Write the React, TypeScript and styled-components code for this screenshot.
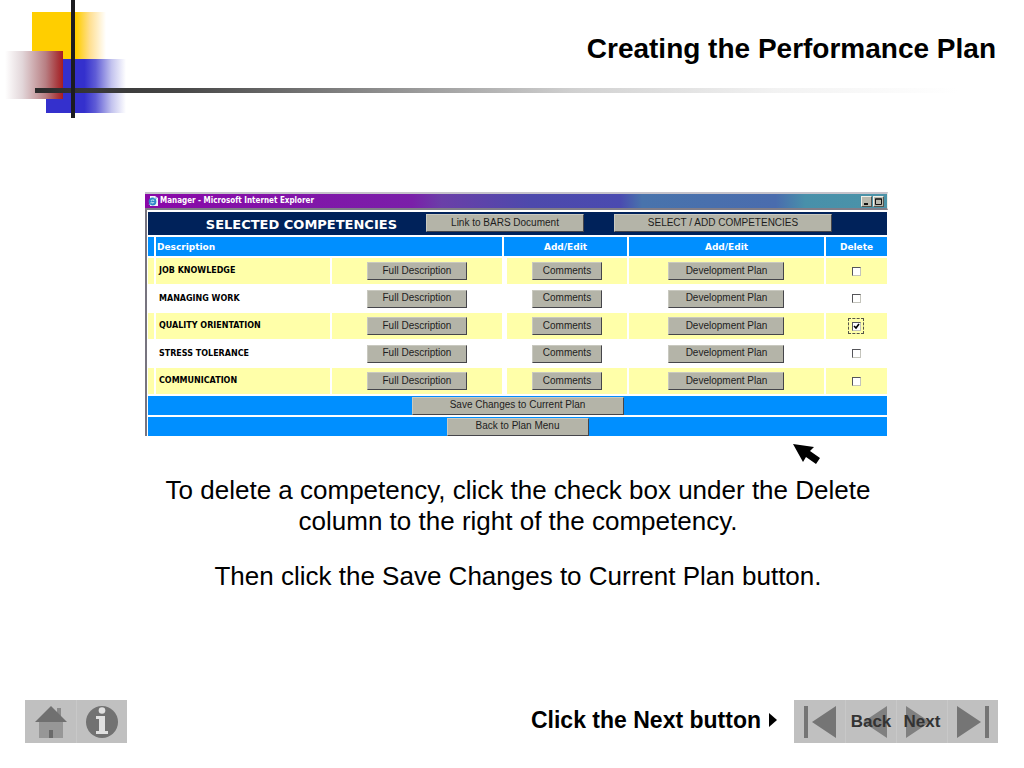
import React from "react";
import styled, { createGlobalStyle, css } from "styled-components";

const sans = `"Liberation Sans", Arial, Helvetica, sans-serif`;
const verdana = `"DejaVu Sans", Verdana, sans-serif`;
const tahoma = `"DejaVu Sans Condensed", "DejaVu Sans", Tahoma, sans-serif`;

const GlobalStyle = createGlobalStyle`
  *, *::before, *::after { box-sizing: border-box; }
  body { margin: 0; background: #fff; color: #000; font-family: ${sans}; }
`;

const Slide = styled.div`
  display: flex;
  flex-direction: column;
  min-height: 100vh;
`;

const Header = styled.header`
  position: relative;
  height: 120px;
  padding: 32px 28px 0 132px;
`;

const Title = styled.h1`
  margin: 0;
  font-size: 28px;
  line-height: 34px;
  font-weight: bold;
  text-align: right;
`;

const Blocks = styled.svg`
  position: absolute;
  left: 0;
  top: 0;
`;

const Rule = styled.div`
  position: absolute;
  left: 35px;
  right: 28px;
  top: 88px;
  height: 5px;
  background: linear-gradient(to right, #2b2b2b 0%, #474747 15%, #8a8a8a 35%, #d0d0d0 56%, #f2f2f2 77%, #fff 96%);
`;

const VerticalBar = styled.div`
  position: absolute;
  left: 71px;
  top: 0;
  width: 4px;
  height: 118px;
  background: #1c1c20;
`;

const Main = styled.main`
  display: flex;
  flex-direction: column;
  align-items: center;
  padding: 72px 16px 0 25px;
`;

const Window = styled.section`
  width: 100%;
  max-width: 743px;
`;

const TitleBar = styled.div`
  display: flex;
  align-items: center;
  gap: 2px;
  height: 18px;
  padding: 0 3px;
  border-top: 2px solid #c6c3cb;
  border-right: 1px solid #f0efe8;
  border-bottom: 2px solid #807d88;
  color: #fff;
  font: bold 8px/14px ${tahoma};
  background: linear-gradient(to right, #8a08a8 0%, #7a1fa9 36%, #6a3fa8 40%, #4d49ac 52%, #4a4ab0 64%, #4873ac 67%, #4a6cae 85%, #4890aa 89%, #4b93a8 100%);
`;

const TitleText = styled.span`
  flex: 1;
`;

const WindowControl = styled.button`
  display: flex;
  width: 11px;
  height: 11px;
  padding: 0;
  border: 1px solid;
  border-color: #f0efe8 #55554f #55554f #f0efe8;
  background: #b9b9ae;
  margin-left: -1px;
`;

const WindowBody = styled.div`
  padding: 2px 0 0 1px;
  border-left: 2px solid #77747f;
`;

const Band = styled.div`
  display: grid;
  grid-template-columns: 278fr 158fr 30fr 218fr 55fr;
  height: 23px;
  margin-right: 1px;
  padding-top: 2px;
  background: #00225a;
`;

const BandTitle = styled.h2`
  margin: 0;
  padding-right: 29px;
  color: #fff;
  font: bold 13px/22px ${verdana};
  text-align: right;
  white-space: nowrap;
`;

const PlanButton = styled.button<{ $width?: string; $column?: number }>`
  width: ${(p) => p.$width ?? "100%"};
  height: 18px;
  padding: 0 0 1px;
  border: 1px solid;
  border-color: #c9c9c0 #45454a #45454a #c9c9c0;
  background: #b4b4a8;
  color: #1d1d1d;
  font: 10px/14px ${sans};
  white-space: nowrap;
  ${(p) =>
    p.$column &&
    css`
      grid-column: ${p.$column};
    `}
`;

const Table = styled.table`
  width: 100%;
  margin-top: 2px;
  table-layout: fixed;
  border-spacing: 0;
`;

const HeadCell = styled.th<{ $left?: boolean; $plain?: boolean }>`
  height: 21px;
  padding: 0 0 0 ${(p) => (p.$left ? 1 : 0)}px;
  border: solid #fff;
  border-width: 0 ${(p) => (p.$plain ? 1 : 2)}px 2px 0;
  background: #008fff;
  color: #fff;
  font: bold 9px/18px ${verdana};
  text-align: ${(p) => (p.$left ? "left" : "center")};
`;

const Row = styled.tr<{ $shaded: boolean }>`
  height: ${(p) => (p.$shaded ? 28 : 27)}px;
  background: ${(p) => (p.$shaded ? "#ffffa9" : "#fff")};
`;

const cell = css`
  padding: 0;
  border: solid #fff;
  border-width: 0 2px 2px 0;
  line-height: 0;
`;

const Cell = styled.td<{ $inset?: boolean }>`
  ${cell}
  border-left-width: ${(p) => (p.$inset ? 3 : 0)}px;
  text-align: center;
  vertical-align: middle;
  &:last-child { border-right-width: 1px; }
`;

const NameCell = styled.th`
  ${cell}
  padding-left: 3px;
  font: bold 8px/12px ${verdana};
  text-align: left;
`;

const ActionCell = styled.td`
  height: 19px;
  padding: 0;
  border-right: 1px solid #fff;
  background: #008fff;
  text-align: center;
  line-height: 0;
  tr:not(:last-child) > & {
    height: 21px;
    border-bottom: 2px solid #fff;
  }
`;

const Check = styled.label`
  display: inline-flex;
  align-items: center;
  justify-content: center;
  width: 16px;
  height: 16px;
  border: 1px dashed transparent;
  &:has(input:checked) { border-color: #55554a; }
`;

const CheckBox = styled.input`
  appearance: none;
  width: 9px;
  height: 9px;
  margin: 0;
  border: 1px solid;
  border-color: #55555a #c4c4bc #c4c4bc #55555a;
  background: #fff;
`;

const Tick = styled.svg`
  position: absolute;
  pointer-events: none;
`;

const Pointer = styled.svg`
  align-self: flex-end;
  margin: 8px 187px 0 0;
`;

const Instruction = styled.p`
  max-width: 720px;
  margin: 0 0 24px;
  font-size: 26px;
  line-height: 31px;
  text-align: center;
`;

const Text = styled.div`
  display: flex;
  flex-direction: column;
  align-items: center;
  padding: 10px 0 0 3px;
`;

const Footer = styled.footer`
  display: flex;
  align-items: center;
  margin-top: auto;
  padding: 0 26px 25px 25px;
`;

const NavGroup = styled.nav`
  display: flex;
`;

const NavButton = styled.button`
  display: grid;
  place-items: center;
  width: 51px;
  height: 43px;
  padding: 0;
  border: 0;
  background: #c0c0c0;
  color: #333;
  font: bold 17px/20px ${sans};
  & + & { border-left: 1px solid #c8c8c8; }
  & > * { grid-area: 1 / 1; }
`;

const Prompt = styled.p`
  display: flex;
  align-items: center;
  gap: 8px;
  margin: 0 17px 4px auto;
  font-size: 23px;
  line-height: 26px;
  font-weight: bold;
`;

const competencies = [
  { name: "JOB KNOWLEDGE", remove: false },
  { name: "MANAGING WORK", remove: false },
  { name: "QUALITY ORIENTATION", remove: true },
  { name: "STRESS TOLERANCE", remove: false },
  { name: "COMMUNICATION", remove: false },
];

const columns = [8, 176, 172, 125, 197, 62];

function Decoration() {
  return (
    <>
      <Blocks width="132" height="120" aria-hidden="true">
        <defs>
          <linearGradient id="gold">
            <stop offset="0.6" stopColor="#ffce00" />
            <stop offset="0.78" stopColor="#ffdf90" />
            <stop offset="1" stopColor="#fff" />
          </linearGradient>
          <linearGradient id="blue">
            <stop offset="0.48" stopColor="#3430cd" />
            <stop offset="0.62" stopColor="#5f5cd6" />
            <stop offset="0.82" stopColor="#c3c3ee" />
            <stop offset="1" stopColor="#fff" />
          </linearGradient>
          <linearGradient id="red">
            <stop offset="0" stopColor="#fff" />
            <stop offset="0.3" stopColor="#e2d6d9" />
            <stop offset="0.7" stopColor="#b87f83" />
            <stop offset="0.9" stopColor="#a93c40" />
            <stop offset="1" stopColor="#a81c22" />
          </linearGradient>
        </defs>
        <rect x="32" y="12" width="74" height="48" fill="url(#gold)" />
        <rect x="46" y="59" width="80" height="54" fill="url(#blue)" />
        <rect x="5" y="51" width="58" height="48" fill="url(#red)" />
      </Blocks>
      <Rule />
      <VerticalBar />
    </>
  );
}

export default function App() {
  return (
    <>
      <GlobalStyle />
      <Slide>
        <Header>
          <Decoration />
          <Title>Creating the Performance Plan</Title>
        </Header>

        <Main>
          <Window>
            <TitleBar>
              <svg width="10" height="12" viewBox="0 0 10 12" aria-hidden="true">
                <path d="M2 1h5l3 2v8H2z" fill="#f4f4f8" />
                <circle cx="4.500" cy="6.500" r="3" fill="#d8ecf8" stroke="#2d86c8" strokeWidth="1.800" />
                <path d="M2 6.500h6" stroke="#2d86c8" strokeWidth="1.500" />
                <path d="M1 10Q6 2 9 3" fill="none" stroke="#6fb4dc" />
              </svg>
              <TitleText>Manager - Microsoft Internet Explorer</TitleText>
              <WindowControl aria-label="Minimize">
                <svg width="9" height="9"><path d="M2 7h4" stroke="#111" strokeWidth="2" /></svg>
              </WindowControl>
              <WindowControl aria-label="Maximize">
                <svg width="9" height="9"><path d="M1.500 2h6v5.500h-6zM1 2h7" fill="none" stroke="#111" /></svg>
              </WindowControl>
            </TitleBar>
            <WindowBody>
              <Band>
                <BandTitle>SELECTED COMPETENCIES</BandTitle>
                <PlanButton $column={2}>Link to BARS Document</PlanButton>
                <PlanButton $column={4}>SELECT / ADD COMPETENCIES</PlanButton>
              </Band>
              <Table>
                <colgroup>
                  {columns.map((w, i) => (
                    <col key={i} style={{ width: `${(w / 740) * 100}%` }} />
                  ))}
                </colgroup>
                <thead>
                  <tr>
                    <HeadCell as="td" />
                    <HeadCell colSpan={2} $left>Description</HeadCell>
                    <HeadCell>Add/Edit</HeadCell>
                    <HeadCell>Add/Edit</HeadCell>
                    <HeadCell $plain>Delete</HeadCell>
                  </tr>
                </thead>
                <tbody>
                  {competencies.map((c, i) => (
                    <Row key={c.name} $shaded={i % 2 === 0}>
                      <Cell />
                      <NameCell scope="row">{c.name}</NameCell>
                      <Cell><PlanButton $width="100px">Full Description</PlanButton></Cell>
                      <Cell $inset><PlanButton $width="70px">Comments</PlanButton></Cell>
                      <Cell><PlanButton $width="116px">Development Plan</PlanButton></Cell>
                      <Cell>
                        <Check>
                          <CheckBox type="checkbox" defaultChecked={c.remove} aria-label={`Delete ${c.name}`} />
                          {c.remove && (
                            <Tick width="7" height="7" aria-hidden="true">
                              <path d="M1 3l2 2 3-4" fill="none" stroke="#000" strokeWidth="1.600" />
                            </Tick>
                          )}
                        </Check>
                      </Cell>
                    </Row>
                  ))}
                  <tr>
                    <ActionCell colSpan={6}>
                      <PlanButton $width="212px">Save Changes to Current Plan</PlanButton>
                    </ActionCell>
                  </tr>
                  <tr>
                    <ActionCell colSpan={6}>
                      <PlanButton $width="142px">Back to Plan Menu</PlanButton>
                    </ActionCell>
                  </tr>
                </tbody>
              </Table>
            </WindowBody>
          </Window>

          <Pointer width="28" height="21" aria-hidden="true">
            <path d="M0 0L21 3L17 7L27 14L23 20L13 13L10 18Z" fill="#000" />
          </Pointer>

          <Text>
            <Instruction>
              To delete a competency, click the check box under the Delete column to the right of the competency.
            </Instruction>
            <Instruction>Then click the Save Changes to Current Plan button.</Instruction>
          </Text>
        </Main>

        <Footer>
          <NavGroup aria-label="Help">
            <NavButton aria-label="Home">
              <svg width="32" height="32" viewBox="0 0 32 32">
                <path d="M22 2h4v10h-4z" fill="#8a8a8a" />
                <path d="M4 16h24v16H4z" fill="#979797" />
                <path d="M16 0L32 16H0z" fill="#707070" />
                <path d="M14 24h4v8h-4z" fill="#6a6a6a" />
              </svg>
            </NavButton>
            <NavButton aria-label="Information">
              <svg width="32" height="32" viewBox="0 0 32 32">
                <circle cx="16" cy="16" r="16" fill="#727272" />
                <circle cx="16" cy="4.500" r="3.300" fill="#e0e0e0" />
                <path d="M10 10h9v15h3v3H10v-3h3V13h-3z" fill="#e0e0e0" />
              </svg>
            </NavButton>
          </NavGroup>
          <Prompt>
            Click the Next button
            <svg width="8" height="14" aria-hidden="true"><path d="M0 0L8 7L0 14z" /></svg>
          </Prompt>
          <NavGroup aria-label="Slides">
            <NavButton aria-label="First">
              <svg width="32" height="32"><path d="M0 0h4v32H0zM32 0v32L8 16z" fill="#757575" /></svg>
            </NavButton>
            <NavButton>
              <svg width="32" height="32"><path d="M32 0v32L8 16z" fill="#808080" /></svg>
              <span>Back</span>
            </NavButton>
            <NavButton>
              <svg width="32" height="32"><path d="M0 0v32L24 16z" fill="#808080" /></svg>
              <span>Next</span>
            </NavButton>
            <NavButton aria-label="Last">
              <svg width="32" height="32"><path d="M0 0v32L24 16zM28 0h4v32h-4z" fill="#757575" /></svg>
            </NavButton>
          </NavGroup>
        </Footer>
      </Slide>
    </>
  );
}
